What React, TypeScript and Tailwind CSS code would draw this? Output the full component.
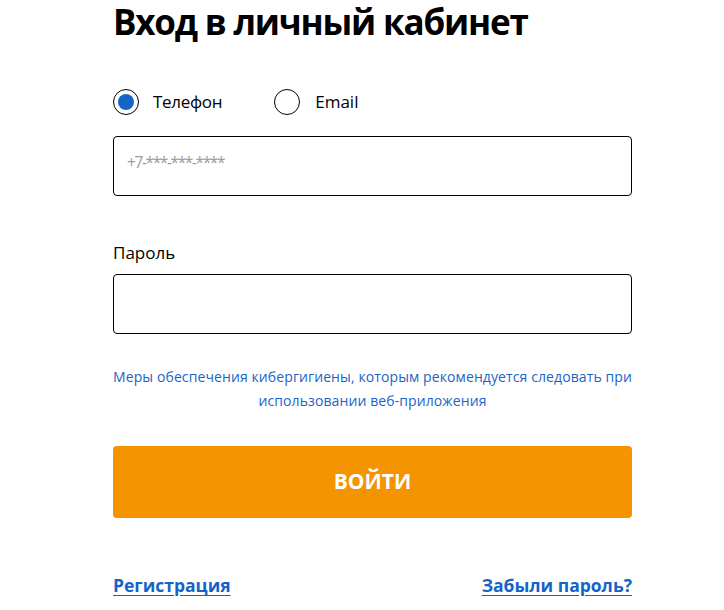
export default function App() {
  return (
    <div
      className="w-[724px] h-[610px] bg-white overflow-hidden"
      style={{ fontFamily: '"Open Sans", "Noto Sans", sans-serif' }}
    >
      <div className="ml-[113px] w-[519px] flex flex-col">
        <h1 className="text-[35px] leading-[44px] font-bold text-black tracking-[-1.2px]">
          Вход в личный кабинет
        </h1>

        <div className="flex items-center mt-[44px] h-[28px]">
          <label className="flex items-center">
            <span className="w-[26px] h-[26px] rounded-full border border-black flex items-center justify-center">
              <span className="w-[16px] h-[16px] rounded-full bg-[#1565c8]" />
            </span>
            <span className="ml-[14px] text-[17px] tracking-[-0.3px] text-black">Телефон</span>
          </label>
          <label className="flex items-center ml-[52px]">
            <span className="w-[26px] h-[26px] rounded-full border border-black" />
            <span className="ml-[15px] text-[17px] text-black">Email</span>
          </label>
        </div>

        <div className="mt-[20px] h-[60px] border border-black rounded-[4px] flex items-center px-[13px]">
          <span className="text-[15.5px] tracking-[-1.4px] text-[#9a9a9a] -mt-[6px]">+7-***-***-****</span>
        </div>

        <div className="mt-[43px] text-[17px] leading-[28px] text-black">Пароль</div>

        <div className="mt-[7px] h-[60px] border border-black rounded-[4px]" />

        <p className="mt-[31px] text-center text-[14px] leading-[24px] tracking-[0.1px] text-[#1a64c8] whitespace-nowrap">
          Меры обеспечения кибергигиены, которым рекомендуется следовать при
          <br />
          использовании веб-приложения
        </p>

        <button className="mt-[33px] h-[72px] rounded-[4px] bg-[#f39400] text-white text-[21px] font-bold">
          ВОЙТИ
        </button>

        <div className="mt-[55px] flex justify-between text-[17.5px] leading-[24px] font-bold text-[#1463c8]">
          <a className="underline underline-offset-[3px]">Регистрация</a>
          <a className="underline underline-offset-[3px]">Забыли пароль?</a>
        </div>
      </div>
    </div>
  );
}
